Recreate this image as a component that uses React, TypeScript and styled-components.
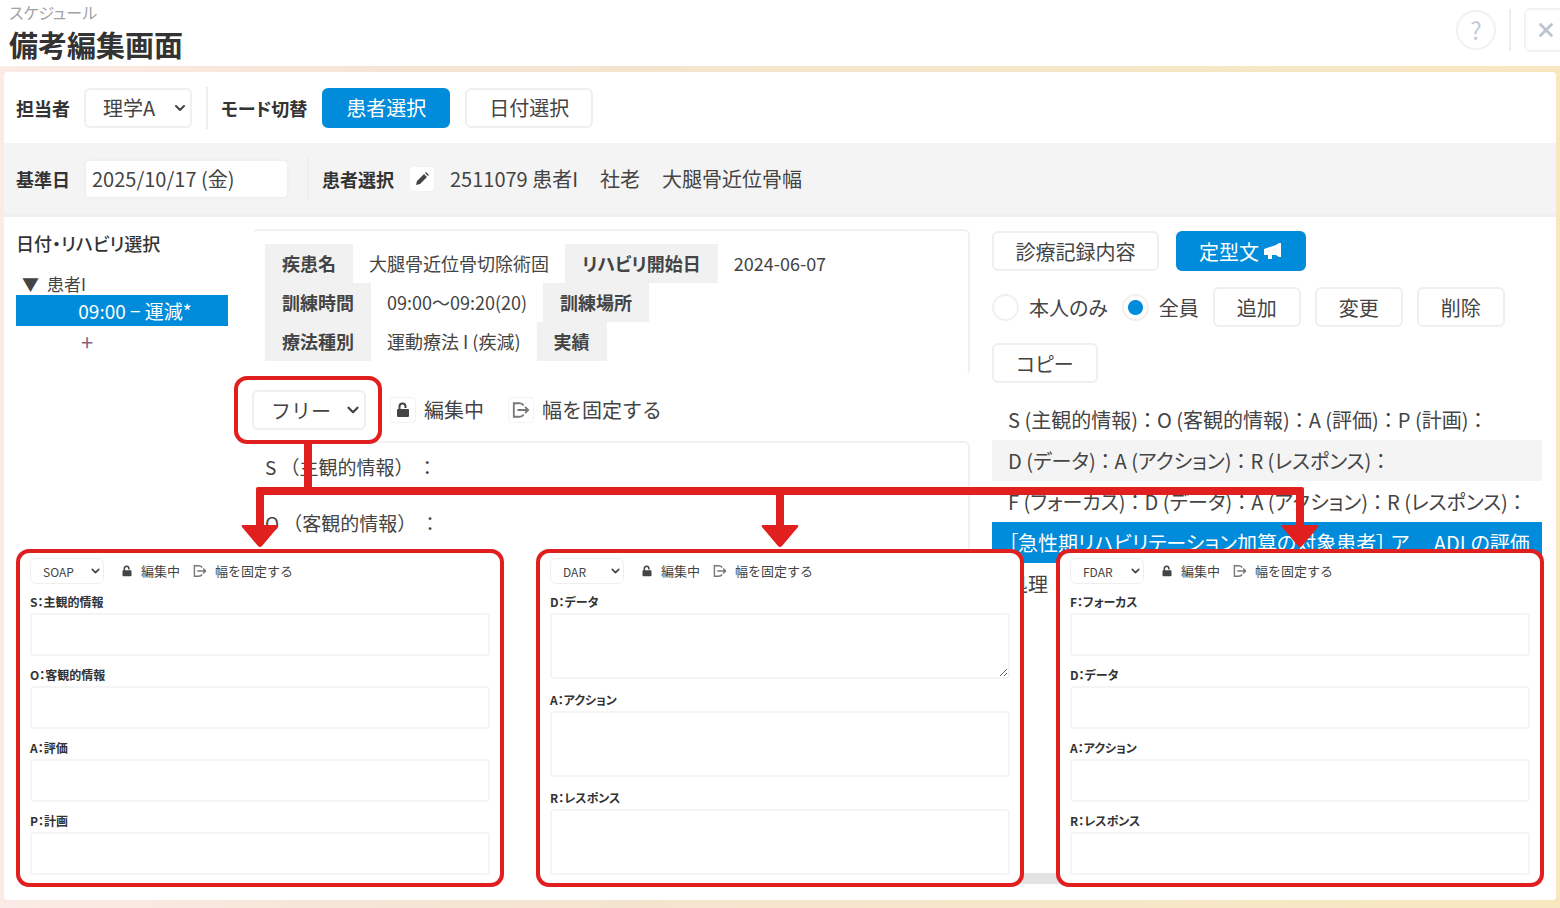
import React from "react";
import styled, { createGlobalStyle, css } from "styled-components";
import { ChevronDown, X } from "lucide-react";

const BLUE = "#008cda";
const RED = "#e11f1f";
const LINE = "#efefef";

const GlobalStyle = createGlobalStyle`
  *, *::before, *::after { box-sizing: border-box; }
  body { margin: 0; background: #fff; }
  body, button, input, select, textarea {
    font-family: "Noto Sans CJK JP", "Noto Sans", sans-serif;
    font-feature-settings: "palt";
    color: #444;
  }
  button { cursor: pointer; }
`;

const Page = styled.div`
  display: flex;
  flex-direction: column;
  min-height: 100vh;
  overflow: hidden;
`;

const Header = styled.header`
  display: flex;
  justify-content: space-between;
  align-items: flex-start;
  height: 66px;
  padding-left: 9px;
`;

const Crumb = styled.div`
  font-size: 16px;
  line-height: 24px;
  color: #a3a3a3;
`;

const Title = styled.h1`
  margin: 0;
  font-size: 29px;
  line-height: 40px;
  font-weight: 700;
  color: #333;
`;

const HeaderTools = styled.div`
  display: flex;
  align-items: center;
  gap: 13px;
  height: 60px;
  margin-right: -8px;
`;

const HelpButton = styled.button`
  width: 40px;
  height: 40px;
  border: 2px solid #f2f2f2;
  border-radius: 50%;
  background: #fff;
  color: #c3cad6;
  font-size: 24px;
  line-height: 32px;
  padding: 0;
`;

const CloseButton = styled.button`
  display: grid;
  place-items: center;
  width: 44px;
  height: 44px;
  border: 2px solid #f2f2f2;
  border-radius: 6px;
  background: #fff;
  color: #bcc4d2;
  padding: 0;
`;

const Divider = styled.span`
  flex: none;
  width: 2px;
  height: 42px;
  background: #eeeeee;
`;

const Frame = styled.main`
  flex: 1;
  display: flex;
  padding: 6px 4px 8px;
  background: linear-gradient(90deg, #fbebe6, #f4e4d2 30%, #f7e8c0);
`;

const Sheet = styled.div`
  flex: 1;
  min-width: 0;
  display: flex;
  flex-direction: column;
  border-radius: 4px;
  background: #fff;
`;

const Bar = styled.div<{ $grey?: boolean }>`
  display: flex;
  align-items: center;
  height: ${(p) => (p.$grey ? 74 : 71)}px;
  padding: 0 12px;
  ${(p) => p.$grey && css`
    background: #f4f4f4;
    border-bottom: 3px solid #efefef;
  `}
`;

const labelText = css`
  font-size: 18px;
  font-weight: 700;
  color: #333;
  white-space: nowrap;
`;

const Label = styled.label`
  ${labelText}
`;

const Caption = styled.span`
  ${labelText}
`;

const Group = styled.div<{ $gap: number; $before?: number; $after?: number }>`
  display: flex;
  align-items: center;
  gap: ${(p) => p.$gap}px;
  margin-left: ${(p) => p.$before ?? 0}px;
  margin-right: ${(p) => p.$after ?? 0}px;
`;

const SelectBox = styled.span<{ $small?: boolean; $w: number }>`
  position: relative;
  display: inline-flex;
  width: ${(p) => p.$w}px;
  height: ${(p) => (p.$small ? 26 : 40)}px;
  select {
    appearance: none;
    width: 100%;
    border: ${(p) => (p.$small ? 1 : 2)}px solid ${LINE};
    border-radius: 6px;
    background: #fff;
    padding: 0 ${(p) => (p.$small ? 12 : 17)}px;
    font-size: ${(p) => (p.$small ? 12 : 20)}px;
    font-feature-settings: normal;
  }
  svg {
    position: absolute;
    right: ${(p) => (p.$small ? 2 : 4)}px;
    top: 50%;
    transform: translateY(-50%);
    pointer-events: none;
  }
`;

const Button = styled.button<{ $w: number; $primary?: boolean }>`
  display: inline-flex;
  align-items: center;
  justify-content: center;
  gap: 4px;
  width: ${(p) => p.$w}px;
  height: 40px;
  padding: 0;
  border: 2px solid ${(p) => (p.$primary ? BLUE : LINE)};
  border-radius: 6px;
  background: ${(p) => (p.$primary ? BLUE : "#fff")};
  color: ${(p) => (p.$primary ? "#fff" : "#444")};
  font-size: 20px;
  white-space: nowrap;
`;

const DateInput = styled.input`
  width: 205px;
  height: 40px;
  border: 2px solid #f0f0f0;
  border-radius: 6px;
  background: #fff;
  padding: 0 6px;
  font-size: 20px;
`;

const IconButton = styled.button`
  display: grid;
  place-items: center;
  width: 26px;
  height: 26px;
  padding: 0;
  border: 1px solid #f2f2f2;
  border-radius: 4px;
  background: #fff;
`;

const Text = styled.span<{ $small?: boolean }>`
  font-size: ${(p) => (p.$small ? 13 : 20)}px;
  line-height: ${(p) => (p.$small ? 20 : 28)}px;
  font-feature-settings: normal;
  white-space: nowrap;
`;

const Stage = styled.div`
  position: relative;
  flex: 1;
  display: grid;
  grid-template-columns: 212px minmax(0, 742fr) minmax(0, 572fr);
  min-height: 680px;
  padding: 12px 14px 24px 12px;
`;

const Side = styled.nav`
  display: flex;
  flex-direction: column;
`;

const SideTitle = styled.h2`
  margin: 0 0 14px;
  font-size: 18px;
  line-height: 28px;
  font-weight: 500;
  color: #333;
`;

const Node = styled.div`
  display: flex;
  align-items: center;
  gap: 8px;
  height: 24px;
  padding-left: 6px;
  font-size: 17px;
  overflow: hidden;
`;

const Slot = styled.button`
  height: 31px;
  border: 0;
  background: ${BLUE};
  color: #fff;
  padding: 0 0 0 26px;
  font-size: 19px;
`;

const AddSlot = styled.button`
  width: 24px;
  height: 30px;
  margin-left: 59px;
  padding: 0;
  border: 0;
  background: none;
  font-size: 22px;
  line-height: 28px;
  color: #8d5f74;
`;

const Center = styled.section`
  display: flex;
  flex-direction: column;
  margin-left: 24px;
`;

const Info = styled.dl`
  height: 147px;
  margin: 0 0 14px;
  padding: 13px 11px;
  border: 2px solid #f1f1f1;
  border-left-color: transparent;
  border-bottom-color: transparent;
  border-radius: 6px;
`;

const InfoRow = styled.div`
  display: flex;
  height: 39px;
  font-size: 18px;
  line-height: 39px;
  white-space: nowrap;
  dt {
    padding: 0 17px;
    background: #f1f1f1;
    font-weight: 700;
  }
  dd {
    margin: 0;
    padding: 0 16px;
  }
`;

const EditorTools = styled.div`
  display: flex;
  align-items: center;
  height: 40px;
  margin-bottom: 11px;
`;

const Note = styled.textarea`
  flex: 1;
  width: 100%;
  border: 2px solid #f1f1f1;
  border-left-color: transparent;
  border-bottom-color: transparent;
  border-radius: 6px;
  padding: 10px 11px;
  font-size: 19px;
  line-height: 28px;
  font-feature-settings: normal;
  resize: none;
`;

const Marker = styled.span`
  position: absolute;
  z-index: 3;
  inset: -14px -16px -14px -18px;
  border: 4px solid ${RED};
  border-radius: 13px;
  pointer-events: none;
  &::after {
    content: "";
    position: absolute;
    left: 50%;
    top: 100%;
    width: 8px;
    height: 50px;
    margin-left: -4px;
    background: ${RED};
  }
`;

const Right = styled.section`
  display: flex;
  flex-direction: column;
  margin-left: 22px;
`;

const Tabs = styled.div`
  display: flex;
  gap: 17px;
  margin-top: 2px;
`;

const Options = styled.div`
  display: flex;
  align-items: center;
  gap: 14px;
  margin: 16px 0;
`;

const Choice = styled.label`
  display: inline-flex;
  align-items: center;
  gap: 10px;
  font-size: 20px;
  white-space: nowrap;
  input {
    appearance: none;
    width: 27px;
    height: 27px;
    margin: 0;
    border: 2px solid #f0f0f0;
    border-radius: 50%;
  }
  input:checked {
    background: radial-gradient(circle, ${BLUE} 7px, #fff 8px);
  }
`;

const Phrases = styled.ul`
  list-style: none;
  margin: 16px 0 0;
  padding: 0;
`;

const Phrase = styled.li<{ $tone?: "grey" | "blue" }>`
  height: 41px;
  padding-left: 16px;
  overflow: hidden;
  white-space: nowrap;
  font-size: 20px;
  line-height: 41px;
  background: ${(p) => (p.$tone === "grey" ? "#f4f4f4" : p.$tone === "blue" ? BLUE : "#fff")};
  color: ${(p) => (p.$tone === "blue" ? "#fff" : "#444")};
`;

const ScrollTrack = styled.div`
  height: 11px;
  margin-top: auto;
  margin-bottom: -8px;
  background: #e3e3e3;
`;

const Callouts = styled.div`
  position: absolute;
  z-index: 2;
  top: 270px;
  left: -4px;
  right: -4px;
`;

const Connector = styled.div`
  height: 8px;
  margin: 0 calc(100% / 6 - 4px);
  border-radius: 2px 2px 0 0;
  background: ${RED};
`;

const Columns = styled.div`
  display: grid;
  grid-template-columns: repeat(3, minmax(0, 1fr));
`;

const Column = styled.div`
  display: flex;
  flex-direction: column;
  align-items: center;
  padding: 0 16px;
`;

const Arrow = styled.svg`
  display: block;
  margin-bottom: 1px;
`;

const Panel = styled.section`
  align-self: stretch;
  height: 338px;
  padding: 5px 10px;
  border: 4px solid ${RED};
  border-radius: 13px;
  background: #fff;
`;

const PanelTools = styled.div`
  display: flex;
  align-items: center;
  height: 26px;
  margin-bottom: 7px;
`;

const Field = styled.label<{ $tall?: boolean }>`
  display: flex;
  flex-direction: column;
  height: ${(p) => (p.$tall ? 98 : 73)}px;
  font-size: 12px;
  line-height: 22px;
  font-weight: 700;
  color: #333;
  textarea {
    width: 100%;
    height: ${(p) => (p.$tall ? 66 : 43)}px;
    border: 2px solid #f5f5f5;
    border-radius: 4px;
    resize: none;
  }
  &:first-of-type textarea {
    resize: ${(p) => (p.$tall ? "vertical" : "none")};
  }
`;

const LockIcon = ({ size }: { size: number }) => (
  <svg width={size} height={size} viewBox="0 0 16 16" fill="none">
    <path d="M4.5 8V4.5a3 3 0 0 1 6 0V6" stroke="#444" strokeWidth="2" />
    <rect x="2" y="7" width="12" height="8" rx="1" fill="#444" />
  </svg>
);

const WidthIcon = ({ size }: { size: number }) => (
  <svg width={size} height={size} viewBox="0 0 20 20" fill="none" stroke="#777" strokeWidth="2">
    <path d="M13 5Q11 2 7 2.500H2v15h5q4 .5 6-2.500" />
    <path d="M6 10h12M14.500 6.500 18 10l-3.500 3.500" />
  </svg>
);

const PencilIcon = () => (
  <svg width="16" height="16" viewBox="0 0 16 16">
    <path d="M2 14l1-4 7-7 3 3-7 7zM11 2l1-1 3 3-1 1z" fill="#444" />
  </svg>
);

const MegaphoneIcon = () => (
  <svg width="20" height="18" viewBox="0 0 20 18" fill="#fff">
    <path d="M1 7l12-4 3-2h2v14h-2l-3-2H9v4H5v-4H1z" />
  </svg>
);

const phrases: { text: string; tone?: "grey" | "blue" }[] = [
  { text: "S (主観的情報) ： O (客観的情報) ： A (評価) ： P (計画) ：" },
  { text: "D (データ) ： A (アクション) ： R (レスポンス) ：", tone: "grey" },
  { text: "F (フォーカス) ： D (データ) ： A (アクション) ： R (レスポンス) ：" },
  { text: "［急性期リハビリテーション加算の対象患者］  ア　  ADLの評価", tone: "blue" },
  { text: "処理" },
];

const panels = [
  { kind: "SOAP", fields: ["S：主観的情報", "O：客観的情報", "A：評価", "P：計画"] },
  { kind: "DAR", fields: ["D：データ", "A：アクション", "R：レスポンス"] },
  { kind: "FDAR", fields: ["F：フォーカス", "D：データ", "A：アクション", "R：レスポンス"] },
];

export default function App() {
  return (
    <Page>
      <GlobalStyle />
      <Header>
        <div>
          <Crumb>スケジュール</Crumb>
          <Title>備考編集画面</Title>
        </div>
        <HeaderTools>
          <HelpButton aria-label="ヘルプ">?</HelpButton>
          <Divider />
          <CloseButton aria-label="閉じる"><X size={22} strokeWidth={3} /></CloseButton>
        </HeaderTools>
      </Header>
      <Frame>
        <Sheet>
          <Bar>
            <Group $gap={14} $after={14}>
              <Label htmlFor="staff">担当者</Label>
              <SelectBox $w={108}>
                <select id="staff"><option>理学A</option></select>
                <ChevronDown size={16} strokeWidth={3} />
              </SelectBox>
            </Group>
            <Divider />
            <Group $gap={15} $before={13}>
              <Caption>モード切替</Caption>
              <Button $w={128} $primary>患者選択</Button>
              <Button $w={128}>日付選択</Button>
            </Group>
          </Bar>
          <Bar $grey>
            <Group $gap={14} $after={18}>
              <Label htmlFor="base">基準日</Label>
              <DateInput id="base" defaultValue="2025/10/17 (金)" />
            </Group>
            <Divider />
            <Group $gap={15} $before={13}>
              <Caption>患者選択</Caption>
              <IconButton aria-label="患者を選択"><PencilIcon /></IconButton>
              <Group $gap={22}>
                <Text>2511079 患者I</Text>
                <Text>社老</Text>
                <Text>大腿骨近位骨幅</Text>
              </Group>
            </Group>
          </Bar>
          <Stage>
            <Side>
              <SideTitle>日付・リハビリ選択</SideTitle>
              <Node><span>▼</span><span>患者I</span></Node>
              <Slot>09:00 − 運減*</Slot>
              <AddSlot aria-label="追加">+</AddSlot>
            </Side>
            <Center>
              <Info>
                <InfoRow>
                  <dt>疾患名</dt><dd>大腿骨近位骨切除術固</dd>
                  <dt>リハビリ開始日</dt><dd>2024-06-07</dd>
                </InfoRow>
                <InfoRow>
                  <dt>訓練時間</dt><dd>09:00～09:20(20)</dd>
                  <dt>訓練場所</dt><dd />
                </InfoRow>
                <InfoRow>
                  <dt>療法種別</dt><dd>運動療法 I (疾減)</dd>
                  <dt>実績</dt><dd />
                </InfoRow>
              </Info>
              <EditorTools>
                <Group $gap={24} $after={24}>
                  <SelectBox $w={114}>
                    <select aria-label="記録形式"><option>フリー</option></select>
                    <ChevronDown size={18} strokeWidth={3} />
                    <Marker />
                  </SelectBox>
                  <Group $gap={8}>
                    <IconButton aria-label="編集ロック"><LockIcon size={16} /></IconButton>
                    <Text>編集中</Text>
                  </Group>
                </Group>
                <Group $gap={8}>
                  <IconButton aria-label="幅の固定"><WidthIcon size={18} /></IconButton>
                  <Text>幅を固定する</Text>
                </Group>
              </EditorTools>
              <Note aria-label="記録" defaultValue={"S （主観的情報） ：\n\nO （客観的情報） ："} />
            </Center>
            <Right>
              <Tabs>
                <Button $w={167}>診療記録内容</Button>
                <Button $w={130} $primary>定型文<MegaphoneIcon /></Button>
              </Tabs>
              <Options>
                <Choice><input type="radio" name="scope" />本人のみ</Choice>
                <Choice><input type="radio" name="scope" defaultChecked />全員</Choice>
                <Button $w={88}>追加</Button>
                <Button $w={88}>変更</Button>
                <Button $w={88}>削除</Button>
              </Options>
              <Button $w={106}>コピー</Button>
              <Phrases>
                {phrases.map((p) => <Phrase key={p.text} $tone={p.tone}>{p.text}</Phrase>)}
              </Phrases>
              <ScrollTrack />
            </Right>
            <Callouts>
              <Connector />
              <Columns>
                {panels.map((panel) => (
                  <Column key={panel.kind}>
                    <Arrow width="38" height="53" viewBox="0 0 38 53" fill={RED}>
                      <path d="M15 0h8v30h13q2 0 1 2L21 51q-2 2-4 0L1 32q-1-2 1-2h13z" />
                    </Arrow>
                    <Panel>
                      <PanelTools>
                        <Group $gap={17} $after={13}>
                          <SelectBox $small $w={74}>
                            <select aria-label={panel.kind}><option>{panel.kind}</option></select>
                            <ChevronDown size={13} strokeWidth={3} />
                          </SelectBox>
                          <Group $gap={8}>
                            <LockIcon size={12} />
                            <Text $small>編集中</Text>
                          </Group>
                        </Group>
                        <Group $gap={8}>
                          <WidthIcon size={14} />
                          <Text $small>幅を固定する</Text>
                        </Group>
                      </PanelTools>
                      {panel.fields.map((f) => (
                        <Field key={f} $tall={panel.fields.length === 3}>
                          {f}
                          <textarea />
                        </Field>
                      ))}
                    </Panel>
                  </Column>
                ))}
              </Columns>
            </Callouts>
          </Stage>
        </Sheet>
      </Frame>
    </Page>
  );
}
